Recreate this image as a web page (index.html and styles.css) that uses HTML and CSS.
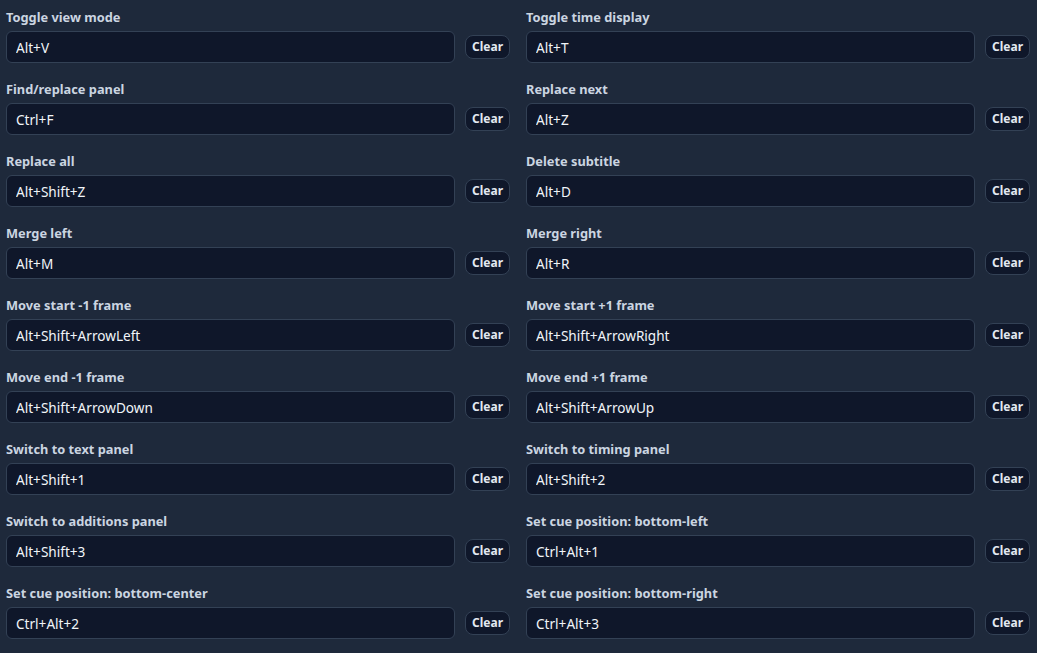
FILE: index.html
```html
<!DOCTYPE html>
<html lang="en">
<head>
<meta charset="utf-8">
<title>Shortcuts</title>
<link rel="stylesheet" href="styles.css">
</head>
<body>
<div class="grid">
  <div class="item"><label class="label">Toggle view mode</label><div class="row"><input class="key" value="Alt+V" readonly><button class="clear">Clear</button></div></div>
  <div class="item"><label class="label">Toggle time display</label><div class="row"><input class="key" value="Alt+T" readonly><button class="clear">Clear</button></div></div>
  <div class="item"><label class="label">Find/replace panel</label><div class="row"><input class="key" value="Ctrl+F" readonly><button class="clear">Clear</button></div></div>
  <div class="item"><label class="label">Replace next</label><div class="row"><input class="key" value="Alt+Z" readonly><button class="clear">Clear</button></div></div>
  <div class="item"><label class="label">Replace all</label><div class="row"><input class="key" value="Alt+Shift+Z" readonly><button class="clear">Clear</button></div></div>
  <div class="item"><label class="label">Delete subtitle</label><div class="row"><input class="key" value="Alt+D" readonly><button class="clear">Clear</button></div></div>
  <div class="item"><label class="label">Merge left</label><div class="row"><input class="key" value="Alt+M" readonly><button class="clear">Clear</button></div></div>
  <div class="item"><label class="label">Merge right</label><div class="row"><input class="key" value="Alt+R" readonly><button class="clear">Clear</button></div></div>
  <div class="item"><label class="label">Move start -1 frame</label><div class="row"><input class="key" value="Alt+Shift+ArrowLeft" readonly><button class="clear">Clear</button></div></div>
  <div class="item"><label class="label">Move start +1 frame</label><div class="row"><input class="key" value="Alt+Shift+ArrowRight" readonly><button class="clear">Clear</button></div></div>
  <div class="item"><label class="label">Move end -1 frame</label><div class="row"><input class="key" value="Alt+Shift+ArrowDown" readonly><button class="clear">Clear</button></div></div>
  <div class="item"><label class="label">Move end +1 frame</label><div class="row"><input class="key" value="Alt+Shift+ArrowUp" readonly><button class="clear">Clear</button></div></div>
  <div class="item"><label class="label">Switch to text panel</label><div class="row"><input class="key" value="Alt+Shift+1" readonly><button class="clear">Clear</button></div></div>
  <div class="item"><label class="label">Switch to timing panel</label><div class="row"><input class="key" value="Alt+Shift+2" readonly><button class="clear">Clear</button></div></div>
  <div class="item"><label class="label">Switch to additions panel</label><div class="row"><input class="key" value="Alt+Shift+3" readonly><button class="clear">Clear</button></div></div>
  <div class="item"><label class="label">Set cue position: bottom-left</label><div class="row"><input class="key" value="Ctrl+Alt+1" readonly><button class="clear">Clear</button></div></div>
  <div class="item"><label class="label">Set cue position: bottom-center</label><div class="row"><input class="key" value="Ctrl+Alt+2" readonly><button class="clear">Clear</button></div></div>
  <div class="item"><label class="label">Set cue position: bottom-right</label><div class="row"><input class="key" value="Ctrl+Alt+3" readonly><button class="clear">Clear</button></div></div>
</div>
</body>
</html>
```
FILE: styles.css
```css
html, body {
  margin: 0;
  padding: 0;
  background: #1e293b;
  font-family: "Noto Sans", "Open Sans", Arial, sans-serif;
}
.grid {
  display: grid;
  grid-template-columns: 1fr 1fr;
  column-gap: 16px;
  row-gap: 16px;
  padding: 7px 7px 0 6px;
}
.item {
  display: flex;
  flex-direction: column;
  gap: 4px;
}
.label {
  font-size: 12.8px;
  font-weight: 700;
  line-height: 20px;
  color: #cbd5e1;
}
.row {
  display: flex;
  align-items: center;
  gap: 10px;
}
.key {
  flex: 1;
  min-width: 0;
  height: 32px;
  box-sizing: border-box;
  border: 1px solid #334155;
  border-radius: 6px;
  background: #0f172a;
  color: #f1f5f9;
  font-family: inherit;
  font-size: 13.6px;
  padding: 0 9px;
  outline: none;
}
.clear {
  height: 24px;
  box-sizing: border-box;
  padding: 0 6px;
  border: 1px solid #334155;
  border-radius: 8px;
  background: #0f172a;
  color: #e2e8f0;
  font-family: inherit;
  font-size: 12px;
  font-weight: 700;
  line-height: 20px;
}
```
